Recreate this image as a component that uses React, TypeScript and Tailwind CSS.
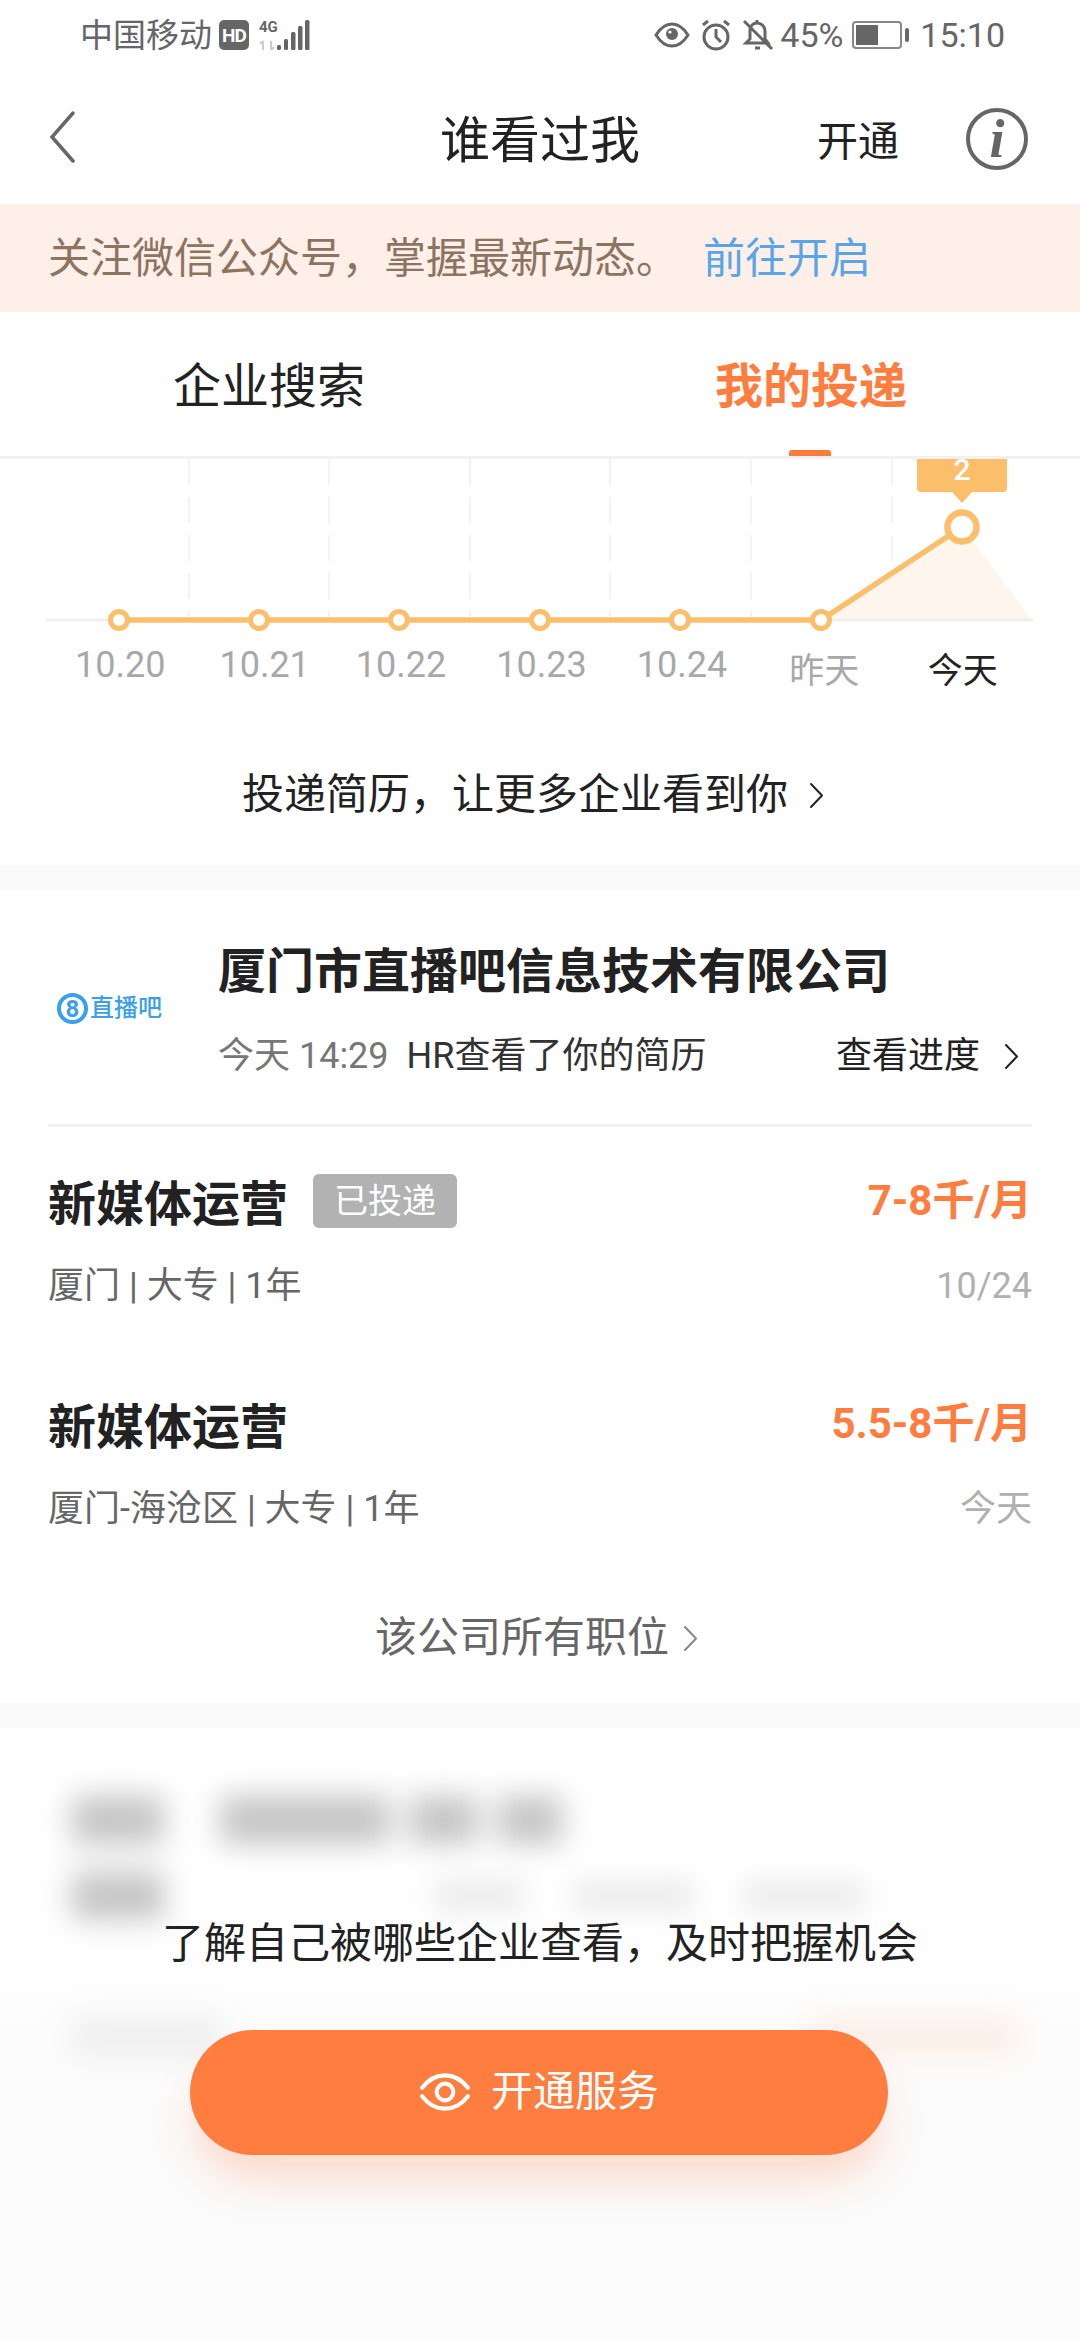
import React from "react";

const font = { fontFamily: '"Roboto","Noto Sans CJK SC",sans-serif' };
const chartX = [119, 259, 399, 540, 680, 821];

function Chevron({ className }: { className: string }) {
  return (
    <svg viewBox="0 0 16 27" className={className} fill="none" stroke="currentColor" strokeWidth="2" strokeLinecap="round" strokeLinejoin="round">
      <path d="M3 2l11 11.5L3 25" />
    </svg>
  );
}

function StatusBar() {
  return (
    <div className="h-[70px] flex items-center justify-between pl-[80px] pr-[75px] text-[#666] text-[34px] leading-none">
      <div className="flex items-center">
        <span className="w-[132px] whitespace-nowrap text-[33px]">中国移动</span>
        <span className="ml-[7px] w-[30px] h-[30px] rounded-[5px] bg-[#666] text-white text-[19px] font-bold flex items-center justify-center tracking-[-1px]">HD</span>
        <svg viewBox="0 0 52 32" className="ml-[10px] w-[52px] h-[32px]">
          <text x="0" y="13" fontSize="15" fontWeight="700" fill="#666" fontFamily="Roboto">4G</text>
          <path d="M4 22v9M1 25l3-3M12 22v9M15 28l-3 3" stroke="#ccc" strokeWidth="2" fill="none" />
          <rect x="18" y="26" width="4" height="5" rx="1.5" fill="#666" />
          <rect x="25" y="20" width="4" height="11" rx="1.5" fill="#666" />
          <rect x="32" y="13" width="4.5" height="18" rx="1.5" fill="#666" />
          <rect x="39" y="7" width="4.5" height="24" rx="1.5" fill="#666" />
          <rect x="46" y="1" width="4.5" height="30" rx="1.5" fill="#666" />
        </svg>
      </div>
      <div className="flex items-center text-[34px]">
        <svg viewBox="0 0 36 26" className="w-[36px] h-[26px]" fill="none" stroke="#666" strokeWidth="3">
          <path d="M2 13C7 5 12 2 18 2s11 3 16 11c-5 8-10 11-16 11S7 21 2 13z" />
          <circle cx="18" cy="12" r="6" fill="#666" stroke="none" />
          <circle cx="16" cy="10" r="1.6" fill="#fff" stroke="none" />
        </svg>
        <svg viewBox="0 0 32 32" className="ml-[10px] w-[32px] h-[32px]" fill="none" stroke="#666" strokeWidth="3">
          <circle cx="16" cy="18" r="12" />
          <path d="M16 10v8l5 5M3 6l5-4M29 6l-5-4" />
        </svg>
        <svg viewBox="0 0 32 32" className="ml-[10px] w-[32px] h-[32px]" fill="none" stroke="#666" strokeWidth="3">
          <path d="M8 11c0-4 3-7 7-7s8 3 8 8v8l3 4H4l4-4v-9zM13 29h5M2 2l28 28M15 1v3" />
        </svg>
        <span className="ml-[6px] w-[62px]">45%</span>
        <div className="ml-[10px] w-[50px] h-[28px] border-2 border-[#888] rounded-[4px] p-[2px] flex">
          <div className="w-[22px] bg-[#666]" />
        </div>
        <div className="ml-[3px] w-[4px] h-[14px] bg-[#666] rounded-[2px]" />
        <span className="ml-[11px]">15:10</span>
      </div>
    </div>
  );
}

function Nav() {
  return (
    <div className="h-[134px] relative flex items-center justify-center">
      <svg viewBox="0 0 26 52" className="absolute left-[49px] top-[41px] w-[26px] h-[52px]" fill="none" stroke="#666" strokeWidth="3.5" strokeLinecap="round">
        <path d="M24 2L3 26l21 24" />
      </svg>
      <span className="text-[50px] text-[#222] leading-none pt-[8px]">谁看过我</span>
      <span className="absolute left-[817px] top-[52px] text-[41px] text-[#222] leading-none">开通</span>
      <div className="absolute left-[966px] top-[38px] w-[62px] h-[62px] rounded-full border-[4px] border-[#666] flex items-center justify-center">
        <span className="text-[54px] italic text-[#666] leading-none font-bold" style={{ fontFamily: '"Liberation Serif",serif' }}>i</span>
      </div>
    </div>
  );
}

function Chart() {
  const y = 161;
  return (
    <svg viewBox="0 0 1080 182" className="block w-[1080px] h-[182px]">
      {[189, 329, 470, 610, 751, 892].map((x) => (
        <line key={x} x1={x} x2={x} y1="0" y2={y} stroke="#f0f0f0" strokeWidth="1.5" strokeDasharray="26 12" />
      ))}
      <polygon points={`821,${y} 962,68 1032,${y}`} fill="#fef6ec" />
      <line x1="46" x2="1033" y1={y} y2={y} stroke="#efefef" strokeWidth="3" />
      <polyline points={`119,${y} 821,${y} 962,68`} fill="none" stroke="#fbbf6b" strokeWidth="5.5" />
      {chartX.map((x) => (
        <circle key={x} cx={x} cy={y} r="8.5" fill="#fff" stroke="#fbbf6b" strokeWidth="5" />
      ))}
      <circle cx="962" cy="68" r="14.5" fill="#fff" stroke="#fbbf6b" strokeWidth="6.5" />
      <path d="M917 0h90v29a4 4 0 0 1-4 4h-31l-10 11-10-11h-31a4 4 0 0 1-4-4z" fill="#fbbf6b" />
      <text x="962" y="21" textAnchor="middle" fontSize="30" fontWeight="500" fill="#fff" fontFamily="Roboto">2</text>
    </svg>
  );
}

function ChartLabels() {
  return (
    <div className="grid grid-cols-7 pl-[50px] pr-[47px] h-[48px] items-center text-center">
      <span className="text-[36px] text-[#a8a8a8] leading-none">10.20</span>
      <span className="text-[36px] text-[#a8a8a8] leading-none pl-[8px]">10.21</span>
      <span className="text-[36px] text-[#a8a8a8] leading-none">10.22</span>
      <span className="text-[36px] text-[#a8a8a8] leading-none">10.23</span>
      <span className="text-[36px] text-[#a8a8a8] leading-none">10.24</span>
      <span className="text-[35px] text-[#a8a8a8] leading-none pt-[12px] pl-[4px]">昨天</span>
      <span className="text-[35px] text-[#222] leading-none pt-[12px]">今天</span>
    </div>
  );
}

function Job({ title, badge, pay, meta, date }: { title: string; badge?: boolean; pay: string; meta: string; date: string }) {
  return (
    <div className="h-[223px] pt-[50px]">
      <div className="h-[56px] flex items-center justify-between">
        <div className="flex items-center">
          <span className="text-[48px] font-bold text-[#222] leading-none">{title}</span>
          {badge && (
            <span className="ml-[25px] -mt-[8px] w-[144px] h-[54px] rounded-[6px] bg-[#b2b2b2] text-white text-[34px] flex items-center justify-center leading-none">已投递</span>
          )}
        </div>
        <span className="text-[42px] font-bold text-[#ff7d3f] leading-none -mt-[8px]">{pay}</span>
      </div>
      <div className="mt-[35px] flex items-center justify-between leading-none">
        <span className="text-[36px] text-[#666]">{meta}</span>
        <span className="text-[36px] text-[#b0b0b0]">{date}</span>
      </div>
    </div>
  );
}

export default function App() {
  return (
    <div className="w-[1080px] h-[2340px] overflow-hidden bg-white" style={font}>
      <StatusBar />
      <Nav />
      <div className="h-[108px] bg-[#ffefe9] pl-[48px] flex items-center text-[42px] leading-none whitespace-nowrap pt-[2px]">
        <span className="text-[#8c7461] w-[655px]">关注微信公众号，掌握最新动态。</span>
        <span className="text-[#5aa5e6]">前往开启</span>
      </div>
      <div className="h-[147px] border-b-[3px] border-[#f1f1f1] relative flex items-center pt-[6px] text-[48px] leading-none">
        <span className="ml-[173px] text-[#222]">企业搜索</span>
        <span className="ml-[350px] text-[#ff7d3f] font-bold">我的投递</span>
        <div className="absolute left-[789px] bottom-0 w-[42px] h-[6px] rounded-t-[3px] bg-[#ff7a3d]" />
      </div>
      <Chart />
      <ChartLabels />
      <div className="h-[176px] flex items-center justify-center pt-[36px] pr-[14px] text-[42px] text-[#222] leading-none">
        <span>投递简历，让更多企业看到你</span>
        <Chevron className="ml-[20px] w-[16px] h-[27px]" />
      </div>
      <div className="h-[25px] bg-[#fafafa]" />
      <div className="mx-[48px] h-[237px] border-b-[3px] border-[#f1f1f1] flex relative">
        <div className="w-[170px] pt-[103px] pl-[9px] flex items-start">
          <span className="w-[31px] h-[31px] rounded-full border-[4px] border-[#3b9fea] text-[#3b9fea] text-[24px] font-bold flex items-center justify-center leading-none">8</span>
          <span className="ml-[2px] text-[24px] text-[#3b9fea] font-medium leading-[30px] whitespace-nowrap">直播吧</span>
        </div>
        <div className="flex-1 pt-[58px]">
          <div className="text-[48px] font-bold text-[#222] leading-none whitespace-nowrap">厦门市直播吧信息技术有限公司</div>
          <div className="mt-[42px] flex items-center justify-between text-[36px] leading-none">
            <div className="whitespace-nowrap">
              <span className="text-[#777]">今天 14:29</span>
              <span className="ml-[18px] text-[#333]">HR查看了你的简历</span>
            </div>
            <div className="flex items-center text-[#222] mr-[13px]">
              <span>查看进度</span>
              <Chevron className="ml-[23px] w-[16px] h-[27px]" />
            </div>
          </div>
        </div>
      </div>
      <div className="mx-[48px]">
        <Job title="新媒体运营" badge pay="7-8千/月" meta="厦门 | 大专 | 1年" date="10/24" />
        <Job title="新媒体运营" pay="5.5-8千/月" meta="厦门-海沧区 | 大专 | 1年" date="今天" />
      </div>
      <div className="h-[130px] flex items-center justify-center pr-[7px] text-[42px] text-[#666] leading-none">
        <span>该公司所有职位</span>
        <Chevron className="ml-[13px] w-[16px] h-[27px] text-[#888]" />
      </div>
      <div className="h-[25px] bg-[#fafafa]" />
      <div className="relative h-[612px] overflow-hidden bg-[#fff]">
        <div className="blur-[15px] pt-[68px] pl-[72px]">
          <div className="flex gap-[56px]">
            <div className="w-[92px] h-[48px] bg-[#c4c4c4]" />
            <div className="flex gap-[20px]">
              <div className="w-[170px] h-[48px] bg-[#c4c4c4]" />
              <div className="w-[68px] h-[48px] bg-[#c4c4c4]" />
              <div className="w-[64px] h-[48px] bg-[#c4c4c4]" />
            </div>
          </div>
          <div className="mt-[28px] flex items-center">
            <div className="w-[92px] h-[48px] bg-[#c4c4c4]" />
            <div className="ml-[270px] flex gap-[50px]">
              <div className="w-[90px] h-[24px] bg-[#e4e4e4]" />
              <div className="w-[120px] h-[24px] bg-[#e4e4e4]" />
              <div className="w-[120px] h-[24px] bg-[#e4e4e4]" />
            </div>
          </div>
          <div className="mt-[100px] flex items-center justify-between pr-[60px]">
            <div className="w-[150px] h-[44px] bg-[#d8d8d8]" />
            <div className="w-[210px] h-[44px] bg-[#ffdac6]" />
          </div>
        </div>
        <div className="absolute inset-0 bg-gradient-to-b from-[#ffffff00] from-30% to-[#fbfbfb] to-62%" />
        <div className="absolute left-0 right-0 top-[190px] text-center text-[42px] text-[#222] leading-[52px]">了解自己被哪些企业查看，及时把握机会</div>
        <div className="absolute left-[190px] top-[302px] w-[698px] h-[125px] rounded-full bg-[#ff7d3f] shadow-[0_30px_40px_-6px_rgba(255,125,63,0.25)] flex items-center justify-center text-white text-[42px] leading-none pb-[2px]">
          <svg viewBox="0 0 50 36" className="mr-[20px] w-[52px] h-[38px]" fill="none" stroke="#fff" strokeWidth="4" strokeLinecap="round">
            <path d="M3 14C9 6 16 2 25 2s16 4 22 12M3 22c6 8 13 12 22 12s16-4 22-12" />
            <circle cx="25" cy="18" r="8" />
          </svg>
          <span>开通服务</span>
        </div>
      </div>
    </div>
  );
}
